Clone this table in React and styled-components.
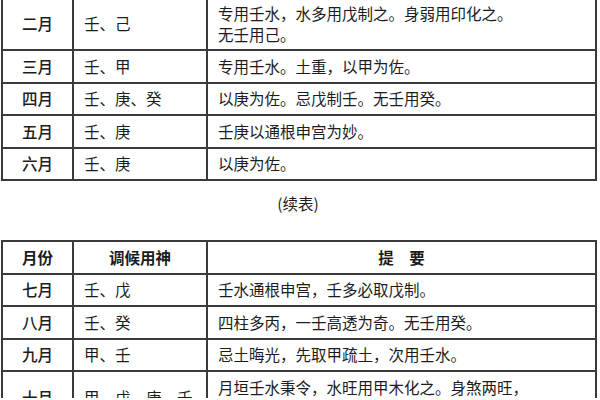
import React from "react";
import styled, { createGlobalStyle } from "styled-components";

const GlobalStyle = createGlobalStyle`
  html, body {
    margin: 0;
    padding: 0;
    background: #fff;
    overflow: hidden;
  }
  body {
    font-family: "Noto Sans CJK SC", "Liberation Sans", sans-serif;
    color: #1c1c1c;
  }
`;

const Page = styled.div`
  width: 600px;
  height: 400px;
  overflow: hidden;
  display: flex;
  flex-direction: column;
  padding-left: 1px;
  margin-top: -2px;
`;

const Table = styled.table`
  width: 594px;
  border-collapse: collapse;
  table-layout: fixed;
  border: 2px solid #2e2e2e;
  ${(p) => (p.$open ? "border-top: none;" : "")}
`;

const Cell = styled.td`
  border: 2px solid #3a3a3a;
  height: ${(p) => p.$h || 30.5}px;
  padding: 0 ${(p) => (p.$center ? 0 : 10)}px;
  text-align: ${(p) => (p.$center ? "center" : "left")};
  vertical-align: middle;
  font-size: 15.5px;
  line-height: 21px;
  font-weight: ${(p) => (p.$bold ? 700 : p.$month ? 500 : 400)};
  white-space: nowrap;
  ${(p) => (p.$open ? "border-top: none;" : "")}
`;

const Caption = styled.div`
  width: 594px;
  text-align: center;
  font-size: 15.5px;
  line-height: 20px;
  font-weight: 400;
  margin: 12px 0 27px;
`;

const Cols = () => (
  <colgroup>
    <col style={{ width: 71 }} />
    <col style={{ width: 134 }} />
    <col style={{ width: 389 }} />
  </colgroup>
);

const topRows = [
  ["二月", "壬、己", ["专用壬水，水多用戊制之。身弱用印化之。", "无壬用己。"]],
  ["三月", "壬、甲", ["专用壬水。土重，以甲为佐。"]],
  ["四月", "壬、庚、癸", ["以庚为佐。忌戊制壬。无壬用癸。"]],
  ["五月", "壬、庚", ["壬庚以通根申宫为妙。"]],
  ["六月", "壬、庚", ["以庚为佐。"]],
];

const bottomRows = [
  ["七月", "壬、戊", ["壬水通根申宫，壬多必取戊制。"]],
  ["八月", "壬、癸", ["四柱多丙，一壬高透为奇。无壬用癸。"]],
  ["九月", "甲、壬", ["忌土晦光，先取甲疏土，次用壬水。"]],
  ["十月", "甲、戊、庚、壬", ["月垣壬水秉令，水旺用甲木化之。身煞两旺，", "用戊制之。火旺宜壬，木旺宜庚。"]],
];

const Row = ({ row, open }) => {
  const [month, gods, lines] = row;
  const h = lines.length > 1 ? 51 : 30.5;
  return (
    <tr>
      <Cell $center $month $h={h} $open={open}>{month}</Cell>
      <Cell $h={h} $open={open}>{gods}</Cell>
      <Cell $h={h} $open={open}>
        {lines.map((l, i) => (
          <div key={i}>{l}</div>
        ))}
      </Cell>
    </tr>
  );
};

export default function App() {
  return (
    <Page>
      <GlobalStyle />
      <Table $open>
        <Cols />
        <tbody>
          {topRows.map((r, i) => (
            <Row key={r[0]} row={r} open={i === 0} />
          ))}
        </tbody>
      </Table>
      <Caption>(续表)</Caption>
      <Table>
        <Cols />
        <tbody>
          <tr>
            <Cell $center $bold>月份</Cell>
            <Cell $center $bold>调候用神</Cell>
            <Cell $center $bold>提　要</Cell>
          </tr>
          {bottomRows.map((r) => (
            <Row key={r[0]} row={r} />
          ))}
        </tbody>
      </Table>
    </Page>
  );
}
